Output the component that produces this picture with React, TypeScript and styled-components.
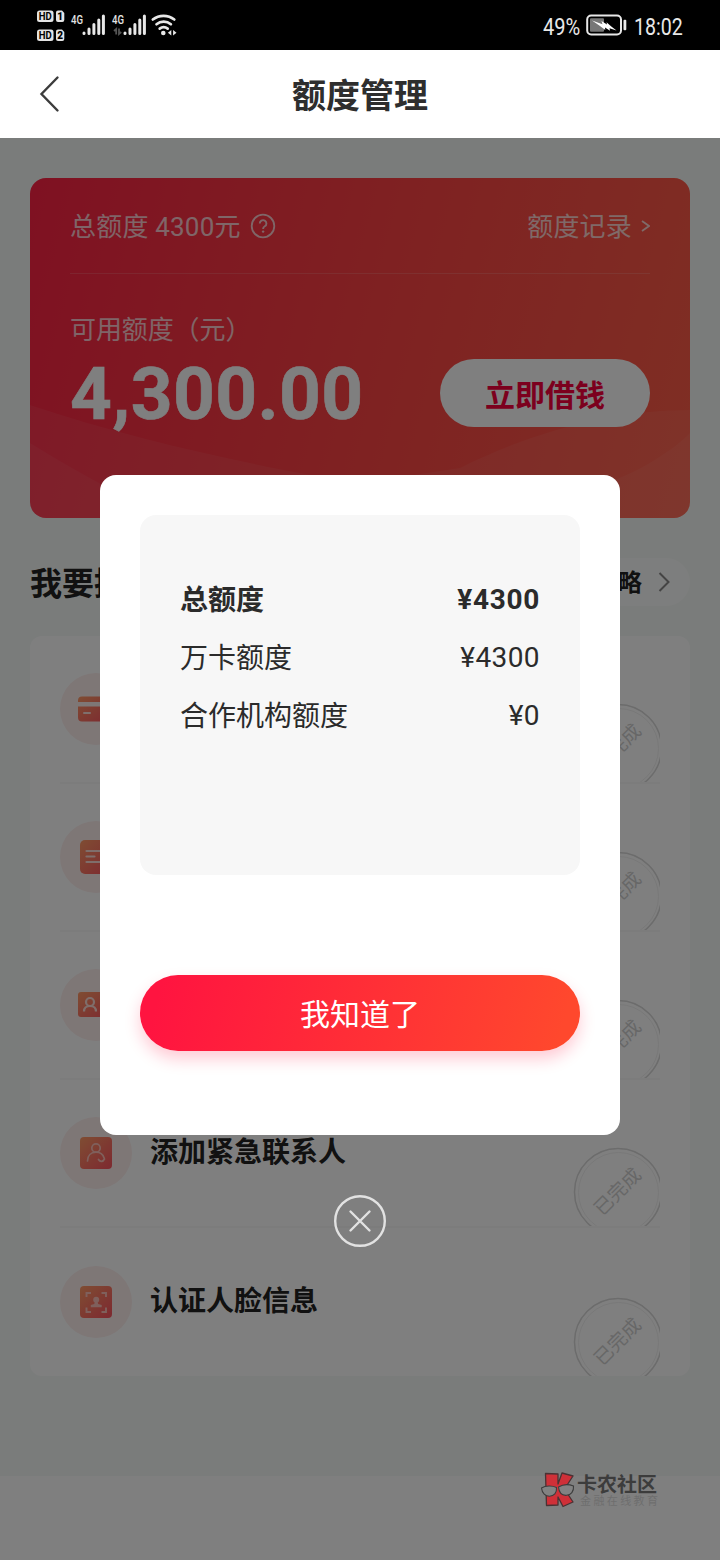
import React from "react";
import styled, { createGlobalStyle, css } from "styled-components";

const GlobalStyle = createGlobalStyle`
  * { box-sizing: border-box; }
  body {
    margin: 0;
    background: #fff;
    font-family: Roboto, "Noto Sans CJK SC", sans-serif;
    color: #222;
  }
  svg { display: block; flex: none; }
  button { font: inherit; border: 0; padding: 0; background: none; }
`;

const Screen = styled.div`
  width: 720px;
  height: 1560px;
  display: flex;
  flex-direction: column;
  overflow: hidden;
`;

/* ---------- status bar ---------- */

const StatusBar = styled.div`
  height: 50px;
  flex: none;
  background: #000;
  display: flex;
  align-items: center;
  justify-content: space-between;
  padding: 0 37px;
`;

const StatusGroup = styled.div`
  display: flex;
  align-items: center;
  height: 50px;
`;

const StatusText = styled.span<{ $w: number; $scale: number }>`
  display: block;
  width: ${(p) => p.$w}px;
  font-size: 24.5px;
  line-height: 30px;
  color: #e8e8e8;
  white-space: nowrap;
  transform: scaleX(${(p) => p.$scale});
  transform-origin: left center;
  padding-top: 3px;
`;

const BatterySlot = styled.div`
  margin: 0 7px 0 5px;
`;

const HdBadges = () => (
  <svg width="28" height="50" viewBox="37 0 28 50">
    {[
      { y: 10.5, n: "1" },
      { y: 29.5, n: "2" },
    ].map(({ y, n }) => (
      <g key={n}>
        <rect x="37" y={y} width="16.5" height="11.5" rx="2.5" fill="#e4e4e4" />
        <path d={`M58 ${y}h4l2.3 2.5v7a2 2 0 0 1-2 2h-4.3a2 2 0 0 1-2-2v-7.500a2 2 0 0 1 2-2z`} fill="#e4e4e4" />
        <text x="45.2" y={y + 9.4} fontSize="10.500" fontWeight="700" textAnchor="middle" textLength="13" lengthAdjust="spacingAndGlyphs" fill="#000">HD</text>
        <text x="60.2" y={y + 9.3} fontSize="10" fontWeight="900" textAnchor="middle" fill="#000">{n}</text>
      </g>
    ))}
  </svg>
);

const Signal = ({ arrows }: { arrows?: boolean }) => (
  <svg width="41" height="50" viewBox="65 0 41 50">
    <text x="71" y="24" fontSize="13" fontWeight="500" textLength="12" lengthAdjust="spacingAndGlyphs" fill="#e4e4e4">4G</text>
    {arrows && (
      <path d="M75.200 34.500v-5.500l-2.200 2M78 28.500v5.500l2.200-2" fill="none" stroke="#555" strokeWidth="1.800" />
    )}
    <path
      d="M84 33v.6M89 29v4.600M93.900 24.500v9.100M98.800 20v13.600M103.400 16v17.600"
      stroke="#e8e8e8"
      strokeWidth="3"
      strokeLinecap="round"
    />
  </svg>
);

const Wifi = () => (
  <svg width="30" height="50" viewBox="145.5 0 30 50">
    <g fill="none" stroke="#e8e8e8" strokeWidth="2.700" strokeLinecap="round">
      <path d="M151.300 19.500a17.500 17.500 0 0 1 21.500 0" />
      <path d="M155 24.200a11.500 11.500 0 0 1 14.400 0" />
      <path d="M158.200 28.600a6.500 6.500 0 0 1 8 0" />
    </g>
    <circle cx="161.800" cy="33" r="2.300" fill="#e8e8e8" />
    <path d="M169.800 30v5.500l-3.400-2.800zM171.600 30v5.500l3.400-2.800z" fill="#e8e8e8" />
  </svg>
);

const Battery = () => (
  <svg width="41" height="24" viewBox="586 13 41 24">
    <rect x="587.200" y="15.500" width="33.800" height="19" rx="4" fill="none" stroke="#e8e8e8" strokeWidth="2" />
    <rect x="590" y="18.300" width="14" height="13.500" rx="1" fill="#777" />
    <path d="M592 20.500l10.500 3.800-1-3.300 5.500 3.600-.5-2.400 4.500 4 5.500 4.300-7-2.200.5 2.400-5-3.200.3 2.600-6-4.600z" fill="#fff" />
    <rect x="623.500" y="19.800" width="2.800" height="10.500" rx="1" fill="#e8e8e8" />
  </svg>
);

/* ---------- header ---------- */

const Header = styled.header`
  height: 88px;
  flex: none;
  background: #fff;
  display: grid;
  grid-template-columns: 100px 1fr 100px;
  align-items: center;
`;

const BackButton = styled.button`
  padding-left: 36px;
`;

const Title = styled.h1`
  margin: 0;
  padding-top: 3px;
  text-align: center;
  font-size: 34px;
  line-height: 48px;
  font-weight: 700;
  color: #2e2e2e;
`;

/* ---------- page body ---------- */

const Body = styled.main`
  position: relative;
  flex: 1;
  display: flex;
  flex-direction: column;
`;

const Page = styled.div`
  height: 1338px;
  flex: none;
  background: #f5f9f7;
  padding: 40px 30px 0;
`;

const QuotaCard = styled.section`
  position: relative;
  height: 340px;
  border-radius: 16px;
  overflow: hidden;
  background: linear-gradient(105deg, #ff2244 0%, #ff4244 50%, #ff5e48 100%);
  color: #fff;
`;

const CardWaves = styled.svg`
  position: absolute;
  inset: 0;
`;

const CardContent = styled.div`
  position: relative;
  padding: 0 40px;
`;

const CardTop = styled.div`
  height: 96px;
  display: flex;
  align-items: center;
  justify-content: space-between;
  border-bottom: 1px solid rgba(255, 255, 255, 0.15);
  font-size: 26px;
`;

const Faded = styled.span`
  display: flex;
  align-items: center;
  gap: 9px;
  letter-spacing: 0.2px;
  color: rgba(255, 255, 255, 0.75);
`;

const FadedText = styled.span`
  padding-bottom: 2px;
`;

const CardLabel = styled.div`
  margin-top: 37px;
  font-size: 26px;
  line-height: 38px;
  letter-spacing: -0.1px;
  color: rgba(255, 255, 255, 0.75);
`;

const AmountRow = styled.div`
  margin-top: 10px;
  height: 68px;
  display: flex;
  align-items: center;
  justify-content: space-between;
`;

const Amount = styled.div`
  font-size: 73px;
  line-height: 68px;
  font-weight: 700;
  letter-spacing: 0.4px;
  padding-top: 1px;
  -webkit-text-stroke: 0.6px currentColor;
`;

const BorrowButton = styled.button`
  width: 210px;
  height: 68px;
  border-radius: 34px;
  background: #fff;
  color: #f8003c;
  font-size: 30px;
  font-weight: 700;
`;

const SectionHead = styled.div`
  margin-top: 40px;
  height: 48px;
  display: flex;
  align-items: center;
  justify-content: space-between;
`;

const SectionTitle = styled.h2`
  margin: 0;
  font-size: 32px;
  font-weight: 700;
  line-height: 48px;
  padding-top: 3px;
`;

const GuidePill = styled.div`
  height: 48px;
  padding: 0 20px 0 24px;
  border-radius: 24px;
  background: #fbfdfc;
  display: flex;
  align-items: center;
  gap: 16px;
  font-size: 24px;
  font-weight: 700;
`;

const PillText = styled.span`
  padding-bottom: 3px;
`;

const TaskCard = styled.section`
  margin-top: 30px;
  border-radius: 12px;
  background: #fff;
  padding: 0 30px;
`;

const TaskRow = styled.div`
  height: 148px;
  display: flex;
  align-items: center;
  border-bottom: 2px solid #f9f9f9;
  &:last-child { border-bottom: 0; }
`;

const IconDisc = styled.div`
  width: 72px;
  height: 72px;
  border-radius: 50%;
  background: #fdeeed;
  display: flex;
  align-items: center;
  justify-content: center;
`;

const TaskName = styled.div`
  margin-left: 18px;
  flex: 1;
  font-size: 28px;
  line-height: 40px;
  font-weight: 700;
`;

const Stamp = styled.div`
  align-self: flex-end;
  position: relative;
  width: 87px;
  height: 79px;
  overflow: hidden;
`;

const StampText = styled.span`
  position: absolute;
  left: 15px;
  top: 32px;
  width: 60px;
  text-align: center;
  font-size: 19px;
  line-height: 26px;
  color: #cfcfcf;
  transform: rotate(-45deg);
`;

const glyphs: Record<string, React.ReactNode> = {
  card: (
    <>
      <path d="M2 9.500V8a4 4 0 0 1 4-4h24a4 4 0 0 1 4 4v1.500zM2 14h32v11a4 4 0 0 1-4 4H6a4 4 0 0 1-4-4z" fill="url(#ember)" transform="translate(-2 1.500)" />
      <path d="M6 22h6" stroke="#ffe0da" strokeWidth="2" strokeLinecap="round" />
    </>
  ),
  note: (
    <>
      <rect x="2" y="1" width="32" height="34" rx="5" fill="url(#ember)" />
      <path d="M8.500 12h16M8.500 17.500h8M8.500 23h16" stroke="#ffdcd6" strokeWidth="2.200" strokeLinecap="round" />
    </>
  ),
  id: (
    <>
      <rect x="0" y="5" width="36" height="25" rx="3" fill="url(#ember)" />
      <circle cx="12" cy="15" r="4" fill="none" stroke="#ffdcd6" strokeWidth="2.200" />
      <path d="M6 24.500c0-4 3-5.500 6-5.500s6 1.500 6 5.500M23 14h8M23 20h6" fill="none" stroke="#ffdcd6" strokeWidth="2.200" />
    </>
  ),
  contact: (
    <>
      <rect x="2" y="2" width="32" height="32" rx="4" fill="url(#ember)" />
      <circle cx="18" cy="13" r="4.200" fill="none" stroke="#ffc0b8" strokeWidth="1.700" />
      <path d="M9.500 26c0-5.500 3.500-8.800 8.500-8.800 4 0 7 2.300 8.200 6M20.500 24.500c1.500 2.500 4.500 2.500 6-.5" fill="none" stroke="#ffc0b8" strokeWidth="1.700" strokeLinecap="round" />
    </>
  ),
  face: (
    <>
      <rect x="2" y="2" width="32" height="32" rx="4" fill="url(#ember)" />
      <path d="M8.500 13V9H13M23.500 9H28v4M8.500 23.500V28H13M23.500 28H28v-4.500" fill="none" stroke="#ffc0b8" strokeWidth="1.900" />
      <circle cx="18.200" cy="15.800" r="3" fill="#ffc0b8" />
      <path d="M16.800 18h2.800l.6 2 3.500 1v2.200H12.800V21l3.500-1z" fill="#ffc0b8" />
    </>
  ),
};

const TaskIcon = ({ kind }: { kind: string }) => (
  <IconDisc>
    <svg width="36" height="36" viewBox="0 0 36 36">
      <defs>
        <linearGradient id="ember" x1="0" y1="0" x2="1" y2="1">
          <stop offset="0" stopColor="#ff9a66" />
          <stop offset="1" stopColor="#fb5260" />
        </linearGradient>
      </defs>
      {glyphs[kind]}
    </svg>
  </IconDisc>
);

const DoneStamp = () => (
  <Stamp>
    <svg width="87" height="79" viewBox="0 0 87 79" fill="none">
      <circle cx="45" cy="45" r="43.500" stroke="#d8d8d8" strokeWidth="1.500" />
      <circle cx="45.500" cy="45.500" r="40" stroke="#f1f1f1" strokeWidth="1" />
    </svg>
    <StampText>已完成</StampText>
  </Stamp>
);

const tasks = [
  { kind: "card", name: "绑定银行卡" },
  { kind: "note", name: "完善个人信息" },
  { kind: "id", name: "认证身份信息" },
  { kind: "contact", name: "添加紧急联系人" },
  { kind: "face", name: "认证人脸信息" },
];

/* ---------- dialog ---------- */

const Overlay = styled.div`
  position: absolute;
  inset: 0;
  padding-top: 337px;
  background: rgba(0, 0, 0, 0.5);
  display: flex;
  flex-direction: column;
  align-items: center;
  gap: 60px;
`;

const Dialog = styled.div`
  width: 520px;
  height: 660px;
  border-radius: 16px;
  background: #fff;
  padding: 40px;
`;

const Details = styled.div`
  height: 360px;
  border-radius: 16px;
  background: #f7f7f7;
  padding: 57px 40px;
`;

const DetailRow = styled.div<{ $strong?: boolean }>`
  height: 58px;
  display: flex;
  align-items: center;
  justify-content: space-between;
  font-size: 28px;
  line-height: 40px;
  color: #2b2b2b;
  ${(p) => p.$strong && css`
    font-weight: 700;
  `}
`;

const DetailValue = styled.span<{ $strong?: boolean }>`
  padding-bottom: 2px;
  letter-spacing: ${(p) => (p.$strong ? 0.7 : 0.4)}px;
`;

const ConfirmButton = styled.button`
  display: block;
  margin-top: 100px;
  padding-bottom: 2px;
  width: 100%;
  height: 76px;
  border-radius: 38px;
  background: linear-gradient(105deg, #ff1440 5%, #ff482d 95%);
  box-shadow: 0 8px 16px rgba(255, 20, 64, 0.22);
  color: #fff;
  font-size: 30px;
`;

/* ---------- community mark ---------- */

const Watermark = styled.div`
  position: absolute;
  left: 540px;
  top: 1332px;
  display: flex;
  align-items: flex-start;
  gap: 2px;
`;

const MarkTexts = styled.div`
  padding-top: 3px;
  white-space: nowrap;
`;

const MarkName = styled.div`
  font-size: 20px;
  line-height: 24px;
  font-weight: 700;
  color: #3c3c3c;
`;

const MarkTag = styled.div`
  font-size: 11px;
  line-height: 11px;
  letter-spacing: 2.4px;
  margin: -1px 0 0 3px;
  color: #6e6e6e;
`;

const details = [
  { label: "总额度", value: "¥4300", strong: true },
  { label: "万卡额度", value: "¥4300" },
  { label: "合作机构额度", value: "¥0" },
];

export default function App() {
  return (
    <Screen>
      <GlobalStyle />
      <StatusBar>
        <StatusGroup>
          <HdBadges />
          <Signal />
          <Signal arrows />
          <Wifi />
        </StatusGroup>
        <StatusGroup>
          <StatusText $w={38} $scale={0.82}>49%</StatusText>
          <BatterySlot><Battery /></BatterySlot>
          <StatusText $w={49} $scale={0.8}>18:02</StatusText>
        </StatusGroup>
      </StatusBar>

      <Header>
        <BackButton aria-label="返回">
          <svg width="28" height="40" viewBox="0 0 28 40">
            <path d="M21.500 3.500L5.500 20l16 16.500" fill="none" stroke="#3c3c3c" strokeWidth="2.400" strokeLinecap="round" />
          </svg>
        </BackButton>
        <Title>额度管理</Title>
      </Header>

      <Body>
        <Page>
          <QuotaCard>
            <CardWaves width="660" height="340" viewBox="0 0 660 340">
              <path d="M0 227C90 257 190 280 270 295L330 305L430 290C510 250 590 232 660 232V340H0z" fill="#fff" fillOpacity="0.06" />
              <path d="M0 265C40 290 80 310 130 340H0zM560 310C600 300 640 275 660 255V340H500z" fill="#fff" fillOpacity="0.05" />
            </CardWaves>
            <CardContent>
              <CardTop>
                <Faded>
                  <FadedText>总额度 4300元</FadedText>
                  <svg width="26" height="26" viewBox="0 0 26 26">
                    <circle cx="13" cy="13" r="11.300" fill="none" stroke="currentColor" strokeWidth="1.800" />
                    <path d="M9.800 10.500a3.300 3.300 0 1 1 5 2.800c-1.200.7-1.700 1.300-1.700 2.600" fill="none" stroke="currentColor" strokeWidth="1.900" />
                    <circle cx="13.100" cy="18.600" r="1.200" fill="currentColor" />
                  </svg>
                </Faded>
                <Faded>
                  <FadedText>额度记录</FadedText>
                  <svg width="9" height="14" viewBox="0 0 9 14">
                    <path d="M1 2l7 5-7 5" fill="none" stroke="currentColor" strokeWidth="1.800" />
                  </svg>
                </Faded>
              </CardTop>
              <CardLabel>可用额度（元）</CardLabel>
              <AmountRow>
                <Amount>4,300.00</Amount>
                <BorrowButton>立即借钱</BorrowButton>
              </AmountRow>
            </CardContent>
          </QuotaCard>

          <SectionHead>
            <SectionTitle>我要提额</SectionTitle>
            <GuidePill>
              <PillText>提额攻略</PillText>
              <svg width="12" height="20" viewBox="0 0 12 20">
                <path d="M1.500 1l9 9-9 9" fill="none" stroke="#888" strokeWidth="2" />
              </svg>
            </GuidePill>
          </SectionHead>

          <TaskCard>
            {tasks.map((t) => (
              <TaskRow key={t.kind}>
                <TaskIcon kind={t.kind} />
                <TaskName>{t.name}</TaskName>
                <DoneStamp />
              </TaskRow>
            ))}
          </TaskCard>
        </Page>

        <Overlay>
          <Dialog>
            <Details>
              {details.map((d) => (
                <DetailRow key={d.label} $strong={d.strong}>
                  <span>{d.label}</span>
                  <DetailValue $strong={d.strong}>{d.value}</DetailValue>
                </DetailRow>
              ))}
            </Details>
            <ConfirmButton>我知道了</ConfirmButton>
          </Dialog>
          <button aria-label="关闭">
            <svg width="52" height="52" viewBox="0 0 52 52" fill="none" stroke="#e2e2e2" strokeLinecap="round">
              <circle cx="26" cy="26" r="24.800" strokeWidth="2.400" />
              <path d="M16.500 16.500l19 19M35.500 16.500l-19 19" strokeWidth="2.400" />
            </svg>
          </button>
        </Overlay>

        <Watermark>
          <svg width="35" height="38" viewBox="0 0 35 38">
            <path d="M5.500 3.500L18 4v10l4-11 11 3-8.500 13L33 32l-10 4.500-5-9.500v8l-11.500.5z" fill="#cf3038" stroke="#4a3234" strokeWidth="1.300" strokeLinejoin="round" />
            <g fill="#828282" stroke="#3c3c3c" strokeWidth="1.100">
              <path d="M1.500 18c4-2.500 11-2.500 15-.5.500 5.500-2.500 8.700-7 8.700-4 0-7.500-3-8-8.200z" />
              <path d="M18.500 17c4-2.500 10-3 15-1 .5 5.500-2.500 9-7 9.300s-7.500-3-8-8.300z" />
            </g>
          </svg>
          <MarkTexts>
            <MarkName>卡农社区</MarkName>
            <MarkTag>金融在线教育</MarkTag>
          </MarkTexts>
        </Watermark>
      </Body>
    </Screen>
  );
}
